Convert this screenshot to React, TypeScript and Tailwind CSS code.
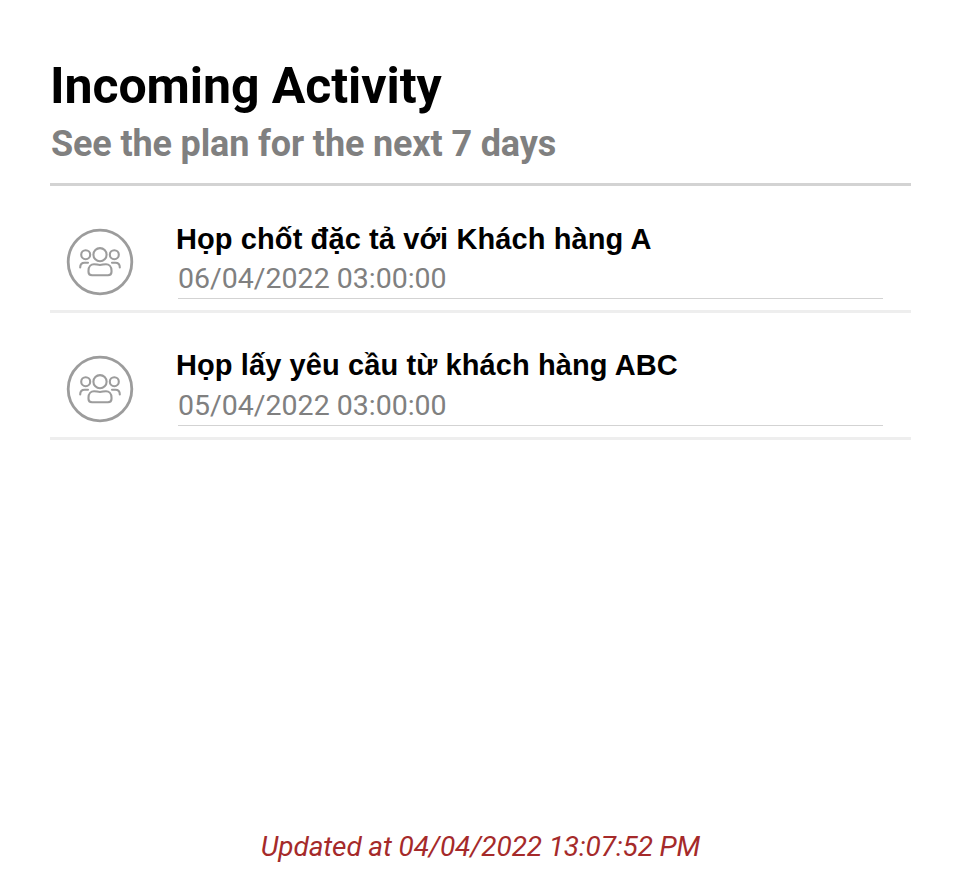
import React from 'react';

const activities = [
  { title: 'Họp chốt đặc tả với Khách hàng A', time: '06/04/2022 03:00:00', titleClass: '' },
  { title: 'Họp lấy yêu cầu từ khách hàng ABC', time: '05/04/2022 03:00:00', titleClass: '-mt-px mb-px' },
];

function PeopleIcon() {
  return (
    <svg className="block h-[68px] w-[68px]" viewBox="0 0 68 68" fill="none" stroke="#9c9c9c" strokeWidth="2.1" strokeLinecap="round" strokeLinejoin="round">
      <circle cx="34" cy="34" r="31.8" strokeWidth="2.8" />
      <circle cx="34" cy="26.7" r="6.6" />
      <circle cx="19.7" cy="26.7" r="4.5" />
      <circle cx="48.3" cy="26.7" r="4.5" />
      <path d="M26 47.2C23.5 47.2 22.5 46 22.5 44V42.5C22.5 38.5 25 36.2 28 36.2C30.5 36.2 31.5 37 34 37C36.5 37 37.5 36.2 40 36.2C43 36.2 45.5 38.5 45.5 42.5V44C45.5 46 44.5 47.2 42 47.2Z" />
      <path d="M14.2 39.5C14.2 36.5 16 34.7 18.5 34.7H22M53.8 39.5C53.8 36.5 52 34.7 49.5 34.7H46" />
    </svg>
  );
}

export default function App() {
  return (
    <main className="flex h-[886px] w-[961px] flex-col bg-white px-[50px] font-['Roboto',sans-serif]">
      <header className="h-[186px] border-b-[3px] border-[#d3d3d3] pt-[57px]">
        <h1 className="text-[50px] leading-[59px] font-bold tracking-[-0.08px] text-black">Incoming Activity</h1>
        <p className="pt-[7px] pl-px text-[36px] leading-[42px] font-bold tracking-[-0.14px] text-[#808080]">See the plan for the next 7 days</p>
      </header>
      <ul>
        {activities.map((a) => (
          <li key={a.time} className="flex h-[127px] border-b-[3px] border-[#eeeeee] pt-[42px] pl-4">
            <PeopleIcon />
            <div className="-mt-[8px] ml-[44px] w-[705px]">
              <div className={a.titleClass}>
                <h2 className="-ml-[2px] whitespace-nowrap font-['Liberation_Sans',sans-serif] text-[29px] leading-[38px] font-bold tracking-[0.1px] text-black">{a.title}</h2>
              </div>
              <p className="h-[41px] border-b border-[#d3d3d3] pt-px text-[28.5px] leading-[40px] text-[#808080]">{a.time}</p>
            </div>
          </li>
        ))}
      </ul>
      <footer className="mt-auto pb-[19px] text-center text-[28px] leading-[40px] tracking-[-0.11px] text-[#a52a2a] italic">Updated at 04/04/2022 13:07:52 PM</footer>
    </main>
  );
}
